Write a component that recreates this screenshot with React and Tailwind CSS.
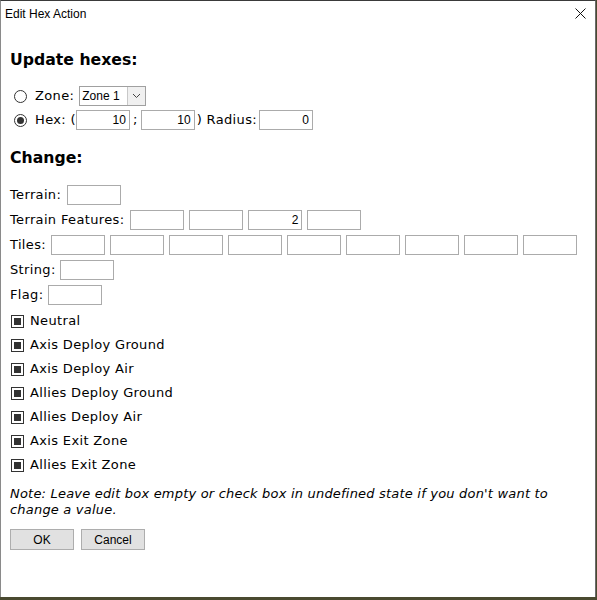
// Edit Hex Action dialog

const body = { fontFamily: '"DejaVu Sans", Verdana, sans-serif' };
const ui = { fontFamily: '"Liberation Sans", Arial, sans-serif' };

function Field({ value = "", className = "" }) {
    return (
        <div
            style={ui}
            className={"flex h-[20px] w-[54px] shrink-0 items-center justify-end border border-[#ababab] bg-white pr-[3px] text-[12px] tracking-normal text-black " + className}
        >
            {value}
        </div>
    );
}

function Radio({ checked }) {
    return (
        <div className="flex h-[13px] w-[13px] items-center justify-center rounded-full border border-[#333333] bg-white">
            {checked && <div className="h-[7px] w-[7px] rounded-full bg-[#333333]" />}
        </div>
    );
}

function TriCheck({ label }) {
    return (
        <div className="flex h-[24px] items-center">
            <div className="flex h-[13px] w-[13px] items-center justify-center border border-[#333333] bg-white">
                <div className="h-[7px] w-[7px] bg-[#333333]" />
            </div>
            <span className="ml-[6px]">{label}</span>
        </div>
    );
}

export default function App() {

    const tiles = ["", "", "", "", "", "", "", "", ""];
    const features = ["", "", "2", ""];
    const checks = [
        "Neutral",
        "Axis Deploy Ground",
        "Axis Deploy Air",
        "Allies Deploy Ground",
        "Allies Deploy Air",
        "Axis Exit Zone",
        "Allies Exit Zone",
    ];

    return (
        <div className="h-[600px] w-[597px] overflow-hidden bg-[#4a4a30]">
            <div className="h-[597px] w-[596px] border-t border-l border-r border-t-[#3a3a3a] border-l-[#8a8a8a] border-r-[#6b6b6b] bg-white text-[13px] tracking-[0.35px] text-black" style={body}>

                {/* title bar */}
                <div className="flex h-[25px] items-center justify-between pl-[4px] pr-[9px] tracking-normal">
                    <span style={ui} className="text-[12px]">Edit Hex Action</span>
                    <svg width="11" height="11" viewBox="0 0 11 11">
                        <path d="M0.5 0.5 L10.5 10.5 M10.5 0.5 L0.5 10.5" stroke="#111" strokeWidth="1" />
                    </svg>
                </div>

                <div className="pl-[9px]">

                    <h1 className="mt-[24px] h-[20px] text-[15.7px] font-bold leading-[20px] tracking-normal">
                        Update hexes:
                    </h1>

                    {/* zone */}
                    <div className="mt-[16px] flex h-[20px] items-center">
                        <div className="ml-[4px]"><Radio /></div>
                        <span className="ml-[8px]">Zone:</span>
                        <div className="ml-[5px] flex h-[20px] w-[67px] items-center border border-[#a0a0a0] bg-white tracking-normal">
                            <span style={ui} className="flex-1 pl-[2px] text-[12px]">Zone 1</span>
                            <div className="flex h-full w-[18px] items-center justify-center border-l border-[#c8c8c8] bg-[#f0f0f0]">
                                <svg width="9" height="6" viewBox="0 0 9 6">
                                    <path d="M1 1 L4.5 4.5 L8 1" fill="none" stroke="#444" strokeWidth="1" />
                                </svg>
                            </div>
                        </div>
                    </div>

                    {/* hex */}
                    <div className="mt-[4px] flex h-[20px] items-center">
                        <div className="ml-[4px]"><Radio checked /></div>
                        <span className="ml-[8px]">Hex: (</span>
                        <Field value="10" className="w-[53px]" />
                        <span className="ml-[3px]">;</span>
                        <Field value="10" className="ml-[3px] w-[53px]" />
                        <span className="ml-[2px]">) Radius:</span>
                        <Field value="0" className="ml-[2px] w-[54px]" />
                    </div>

                    <h1 className="mt-[18px] h-[20px] text-[15.7px] font-bold leading-[20px] tracking-normal">
                        Change:
                    </h1>

                    <div className="mt-[17px] flex flex-col gap-[5px]">
                        <div className="flex items-center gap-[6px]">
                            <span>Terrain:</span>
                            <Field />
                        </div>
                        <div className="flex items-center gap-[5px]">
                            <span className="mr-[1px]">Terrain Features:</span>
                            {features.map((v, i) => <Field key={i} value={v} />)}
                        </div>
                        <div className="flex items-center gap-[5px]">
                            <span>Tiles:</span>
                            {tiles.map((v, i) => <Field key={i} value={v} />)}
                        </div>
                        <div className="flex items-center gap-[4px]">
                            <span>String:</span>
                            <Field />
                        </div>
                        <div className="flex items-center gap-[5px]">
                            <span>Flag:</span>
                            <Field />
                        </div>
                    </div>

                    <div className="mt-[4px] pl-[1px]">
                        {checks.map((c) => <TriCheck key={c} label={c} />)}
                    </div>

                    <p className="mt-[9px] w-[575px] italic leading-[16px] tracking-[0.2px]">
                        Note: Leave edit box empty or check box in undefined state if you don't want to change a value.
                    </p>

                    <div className="mt-[11px] flex gap-[7px] tracking-normal" style={ui}>
                        <button className="h-[21px] w-[64px] border border-[#adadad] bg-[#e1e1e1] text-[12px]">OK</button>
                        <button className="h-[21px] w-[64px] border border-[#adadad] bg-[#e1e1e1] text-[12px]">Cancel</button>
                    </div>

                </div>
            </div>
        </div>
    );
}
